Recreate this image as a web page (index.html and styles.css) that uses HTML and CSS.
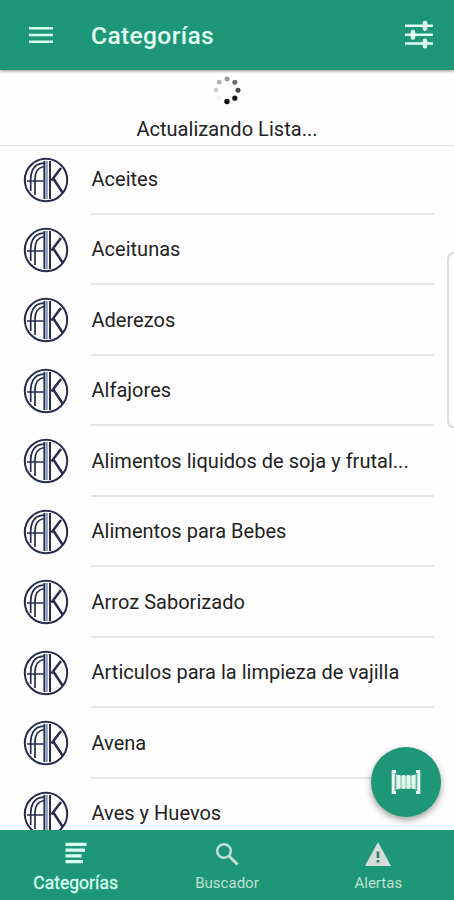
FILE: index.html
```html
<!DOCTYPE html>
<html lang="es">
<head>
<meta charset="utf-8">
<title>Categorías</title>
<link rel="stylesheet" href="styles.css">
</head>
<body>
<svg width="0" height="0" class="defs">
  <symbol id="ak" viewBox="0 0 46 46">
    <g fill="none" stroke="#262b50">
      <circle cx="23" cy="23" r="21.200" stroke-width="2"/>
      <path d="M21 6.200Q13 6.500 9.800 12.500Q7.700 16.500 7.700 22V34M21 9.500Q12 11 12 22V38" stroke-width="1.700"/>
      <path d="M4 24H20.500" stroke-width="1.500"/>
      <path d="M23.500 4V42" stroke="#8b98b8" stroke-width="2.600"/>
      <path d="M21.200 4V42" stroke-width="1.600"/>
      <path d="M27 4V42" stroke-width="2"/>
      <path d="M38 11L28.500 23.500M30 21L39.500 35.500" stroke-width="2.500"/>
    </g>
  </symbol>
</svg>
<div class="app">
  <header class="topbar">
    <svg class="menu" viewBox="0 0 24 18"><path d="M0 2.300H24M0 9H24M0 15.700H24"/></svg>
    <h1>Categorías</h1>
    <svg class="tune" viewBox="0 0 28 30"><path d="M0 5.800H28M0 14.700H28M0 23.500H28" stroke-width="2.400"/><path d="M20 3V8.600M8 12V17.400M20 20.700V26.300" stroke-width="4.600" stroke-linecap="round"/></svg>
  </header>
  <section class="status">
    <svg class="spinner" viewBox="0 0 30 30">
      <circle cx="15" cy="4" r="2.500" fill="#999"/>
      <circle cx="22.800" cy="7.200" r="2.500" fill="#686868"/>
      <circle cx="26" cy="15.300" r="2.500" fill="#444"/>
      <circle cx="22.800" cy="23.200" r="2.600" fill="#171717"/>
      <circle cx="15" cy="26.500" r="2.700" fill="#000"/>
      <circle cx="7.200" cy="23.200" r="2.300" fill="#f1f1f1"/>
      <circle cx="4" cy="15" r="2.400" fill="#d0d0d0"/>
      <circle cx="7.200" cy="7.200" r="2.400" fill="#b0b0b0"/>
    </svg>
    <p>Actualizando Lista...</p>
  </section>
  <main>
    <ul class="list">
      <li><svg class="logo"><use href="#ak"/></svg><span>Aceites</span></li>
      <li><svg class="logo"><use href="#ak"/></svg><span>Aceitunas</span></li>
      <li><svg class="logo"><use href="#ak"/></svg><span>Aderezos</span></li>
      <li><svg class="logo"><use href="#ak"/></svg><span>Alfajores</span></li>
      <li><svg class="logo"><use href="#ak"/></svg><span>Alimentos liquidos de soja y frutal...</span></li>
      <li><svg class="logo"><use href="#ak"/></svg><span>Alimentos para Bebes</span></li>
      <li><svg class="logo"><use href="#ak"/></svg><span>Arroz Saborizado</span></li>
      <li><svg class="logo"><use href="#ak"/></svg><span>Articulos para la limpieza de vajilla</span></li>
      <li><svg class="logo"><use href="#ak"/></svg><span>Avena</span></li>
      <li><svg class="logo"><use href="#ak"/></svg><span>Aves y Huevos</span></li>
    </ul>
  </main>
  <div class="edge-handle"></div>
  <button class="fab" aria-label="Escanear">
    <svg viewBox="0 0 30 26"><path d="M5 2.500H2.200V23.500H5M25 2.500H27.800V23.500H25" fill="none" stroke="#effff8" stroke-width="3"/><path d="M4.500 5L8 6.500H22L25.500 5V21L22 19.500H8L4.500 21Z" fill="#a8dcc6"/><path d="M7.500 6V20M12.500 6V20M17.500 6V20M22.500 6V20" stroke="#e8fff5" stroke-width="2.600"/></svg>
  </button>
  <nav class="tabs">
    <a class="tab active"><svg viewBox="0 0 24 24"><path d="M1.500 3.300H22.500M1.500 9.100H21M1.500 14.900H17.500M1.500 20.700H19" fill="none" stroke="currentColor" stroke-width="3.200"/></svg><span>Categorías</span></a>
    <a class="tab"><svg viewBox="0 0 24 24"><g fill="none" stroke="currentColor" stroke-width="2.500"><circle cx="9" cy="9" r="6.800"/><path d="M14 14L22.500 22.500" stroke-width="3"/></g></svg><span>Buscador</span></a>
    <a class="tab alert"><svg viewBox="0 0 26 24"><path d="M13 0L26 24H0Z" fill="currentColor"/><path d="M13 9.500V16M13 18V20.500" stroke="#397d66" stroke-width="2.800"/></svg><span>Alertas</span></a>
  </nav>
</div>
</body>
</html>
```
FILE: styles.css
```css
* { box-sizing: border-box; }
body {
  margin: 0;
  font-family: Roboto, "Liberation Sans", sans-serif;
  color: #222;
  background: #fefefe;
}
.defs { position: absolute; }
.app {
  position: relative;
  display: flex;
  flex-direction: column;
  height: 900px;
  overflow: hidden;
}
.topbar {
  flex: none;
  display: flex;
  align-items: center;
  height: 70px;
  padding: 0 21px 0 29px;
  background: #1e9776;
  box-shadow: 0 1px 3px rgba(0, 0, 0, .45);
  z-index: 1;
}
.menu { width: 24px; height: 18px; fill: none; stroke: #d9fff1; stroke-width: 2.6; }
h1 {
  flex: 1;
  margin: 0 0 0 38px;
  font-size: 24.6px;
  font-weight: 500;
  letter-spacing: .35px;
  color: #e2fff5;
}
.tune { width: 28px; height: 30px; fill: none; stroke: #e2fff5; }
.status {
  flex: none;
  display: flex;
  flex-direction: column;
  align-items: center;
  height: 76px;
  padding-top: 5px;
  border-bottom: 1.5px solid #dedede;
}
.spinner { width: 30px; height: 30px; }
.status p { margin: 12px 0 0; font-size: 20px; line-height: 24px; letter-spacing: .04px; }
main { flex: 1; min-height: 0; overflow: hidden; }
.list { margin: 0; padding: 0; list-style: none; }
.list li { display: flex; align-items: center; height: 70.5px; padding: 0 20px 0 23.3px; }
.list li:first-child { height: 68.7px; }
.list li:first-child span { padding-top: 0; }
.logo { flex: none; width: 46px; height: 46px; }
.list span {
  flex: 1;
  align-self: stretch;
  display: flex;
  align-items: center;
  margin-left: 22.2px;
  padding-top: 1px;
  font-size: 20px;
  letter-spacing: .02px;
  white-space: nowrap;
  border-bottom: 2px solid #e5e5e5;
}
.edge-handle {
  position: absolute;
  top: 252px;
  right: -8px;
  width: 15px;
  height: 176px;
  border: 2px solid #dcdcdc;
  border-radius: 7px;
}
.fab {
  position: absolute;
  right: 13px;
  top: 747px;
  display: flex;
  align-items: center;
  justify-content: center;
  width: 70px;
  height: 70px;
  padding: 0;
  border: 0;
  border-radius: 50%;
  background: #1e9776;
  box-shadow: 0 3px 7px rgba(0, 0, 0, .38);
}
.fab svg { width: 30px; height: 26px; }
.tabs {
  flex: none;
  display: grid;
  grid-template-columns: repeat(3, 1fr);
  height: 70px;
  background: #1e9776;
  z-index: 1;
}
.tab {
  display: flex;
  flex-direction: column;
  align-items: center;
  padding-top: 12px;
  font-size: 15px;
  letter-spacing: .02px;
  color: #bfe0d2;
}
.tab svg { width: 24px; height: 24px; }
.tab span { margin-top: 7px; line-height: 20px; }
.active { padding-top: 11px; font-size: 17.5px; color: #d9fff1; }
.active span { margin-top: 8px; -webkit-text-stroke: .3px; }
.alert svg { width: 26px; color: #d5ddda; }
```
